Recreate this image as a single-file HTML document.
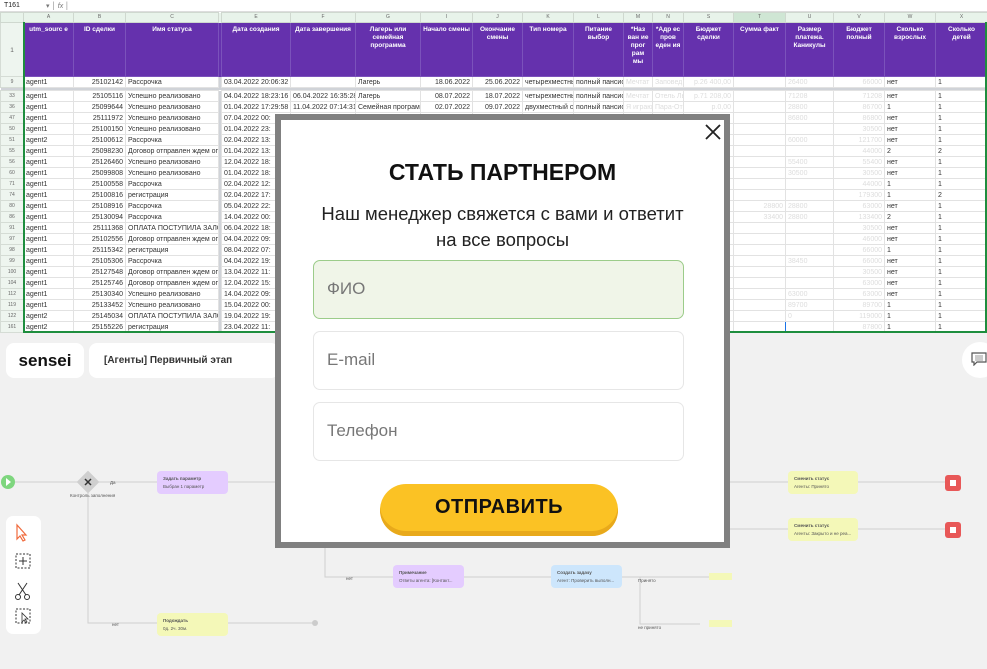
<!DOCTYPE html>
<html><head><meta charset="utf-8">
<style>
*{margin:0;padding:0;box-sizing:border-box}
body{width:987px;height:669px;overflow:hidden;background:#f1f1f1;font-family:"Liberation Sans","DejaVu Sans",sans-serif;position:relative}
.abs{position:absolute}
#sheet{position:absolute;left:0;top:0;width:987px;height:333px;background:#fff;overflow:hidden}
#fbar{height:12px;font-size:7px;color:#222;border-bottom:1px solid #ddd;position:relative}
table{border-collapse:collapse;table-layout:fixed;position:absolute;left:0;top:12px;width:987px}
td{border:1px solid #e2e2e2;height:11px;font-size:7px;color:#333;white-space:nowrap;overflow:hidden;padding:0 2px;line-height:9px}
tr.ch td{background:#e8f3ea;color:#666;text-align:center;height:10px;font-size:5px;border-color:#cfd8cf}
tr.hd td{background:#6531ad;color:#fff;font-weight:bold;text-align:center;vertical-align:top;height:54px;white-space:normal;font-size:6.5px;line-height:8px;padding-top:3px;border-color:#7b52bb}
td.rn{background:#eef5ef;color:#666;font-size:5px;text-align:center;padding:0;border-color:#d5dcd5}
tr.hd td.rn{background:#eef5ef;color:#666;vertical-align:middle;font-weight:normal;border-color:#d5dcd5}
td.r{text-align:right}
td.fz{background:#d0d3d8;border:none;padding:0}
td.f{color:#ddd}
</style></head><body>
<div id="sheet">
<div id="fbar"><span class="abs" style="left:4px;top:2px">T161</span><span class="abs" style="left:46px;top:2px;color:#777">▾ │ <i>fx</i> │</span></div>
<table>
<colgroup><col style="width:23px"><col style="width:50px"><col style="width:52px"><col style="width:93px"><col style="width:3px"><col style="width:69px"><col style="width:65px"><col style="width:65px"><col style="width:52px"><col style="width:50px"><col style="width:51px"><col style="width:50px"><col style="width:29px"><col style="width:31px"><col style="width:50px"><col style="width:52px"><col style="width:48px"><col style="width:51px"><col style="width:51px"><col style="width:52px"></colgroup>
<tr class="ch"><td class="rn"></td><td>A</td><td>B</td><td>C</td><td class="fz"></td><td>E</td><td>F</td><td>G</td><td>I</td><td>J</td><td>K</td><td>L</td><td>M</td><td>N</td><td>S</td><td style="background:#cfe6d4">T</td><td>U</td><td>V</td><td>W</td><td>X</td></tr>
<tr class="hd"><td class="rn">1</td><td>utm_sourc e</td><td>ID сделки</td><td>Имя статуса</td><td class="fz"></td><td>Дата создания</td><td>Дата завершения</td><td>Лагерь или семейная программа</td><td>Начало смены</td><td>Окончание смены</td><td>Тип номера</td><td>Питание выбор</td><td>*Наз ван ие прог рам мы</td><td>*Адр ес пров еден ия</td><td>Бюджет сделки</td><td>Сумма факт</td><td>Размер платежа. Каникулы</td><td>Бюджет полный</td><td>Сколько взрослых</td><td>Сколько детей</td></tr>
<tr><td class="rn">9</td><td>agent1</td><td class="r">25102142</td><td>Рассрочка</td><td class="fz"></td><td class="r">03.04.2022 20:06:32</td><td></td><td>Лагерь</td><td class="r">18.06.2022</td><td class="r">25.06.2022</td><td>четырехместны</td><td>полный пансион</td><td class="f">Мечтат</td><td class="f">Заповед</td><td class="r f">р.26 400,00</td><td></td><td class="f">26400</td><td class="r f">66000</td><td>нет</td><td>1</td></tr>
<tr><td colspan="20" style="height:3px;background:#d0d3d8;border:none;padding:0"></td></tr>
<tr><td class="rn">33</td><td>agent1</td><td class="r">25105116</td><td>Успешно реализовано</td><td class="fz"></td><td class="r">04.04.2022 18:23:16</td><td>06.04.2022 16:35:28</td><td>Лагерь</td><td class="r">08.07.2022</td><td class="r">18.07.2022</td><td>четырехместны</td><td>полный пансион</td><td class="f">Мечтат</td><td class="f">Отель Ль</td><td class="r f">р.71 208,00</td><td></td><td class="f">71208</td><td class="r f">71208</td><td>нет</td><td>1</td></tr>
<tr><td class="rn">36</td><td>agent1</td><td class="r">25099644</td><td>Успешно реализовано</td><td class="fz"></td><td class="r">01.04.2022 17:29:58</td><td>11.04.2022 07:14:31</td><td>Семейная програм</td><td class="r">02.07.2022</td><td class="r">09.07.2022</td><td>двухместный ст</td><td>полный пансион</td><td class="f">Я играю</td><td class="f">Пара-Отель</td><td class="r f">р.0,00</td><td></td><td class="f">28800</td><td class="r f">86700</td><td>1</td><td>1</td></tr>
<tr><td class="rn">47</td><td>agent1</td><td class="r">25111972</td><td>Успешно реализовано</td><td class="fz"></td><td>07.04.2022 00:</td><td></td><td></td><td></td><td></td><td></td><td></td><td></td><td></td><td></td><td></td><td class="f">86800</td><td class="r f">86800</td><td>нет</td><td>1</td></tr>
<tr><td class="rn">50</td><td>agent1</td><td class="r">25100150</td><td>Успешно реализовано</td><td class="fz"></td><td>01.04.2022 23:</td><td></td><td></td><td></td><td></td><td></td><td></td><td></td><td></td><td></td><td></td><td></td><td class="r f">30500</td><td>нет</td><td>1</td></tr>
<tr><td class="rn">51</td><td>agent2</td><td class="r">25100612</td><td>Рассрочка</td><td class="fz"></td><td>02.04.2022 13:</td><td></td><td></td><td></td><td></td><td></td><td></td><td></td><td></td><td></td><td></td><td class="f">60000</td><td class="r f">121700</td><td>нет</td><td>1</td></tr>
<tr><td class="rn">55</td><td>agent1</td><td class="r">25098230</td><td>Договор отправлен ждем опл</td><td class="fz"></td><td>01.04.2022 13:</td><td></td><td></td><td></td><td></td><td></td><td></td><td></td><td></td><td></td><td></td><td></td><td class="r f">44000</td><td>2</td><td>2</td></tr>
<tr><td class="rn">56</td><td>agent1</td><td class="r">25126460</td><td>Успешно реализовано</td><td class="fz"></td><td>12.04.2022 18:</td><td></td><td></td><td></td><td></td><td></td><td></td><td></td><td></td><td></td><td></td><td class="f">55400</td><td class="r f">55400</td><td>нет</td><td>1</td></tr>
<tr><td class="rn">60</td><td>agent1</td><td class="r">25099808</td><td>Успешно реализовано</td><td class="fz"></td><td>01.04.2022 18:</td><td></td><td></td><td></td><td></td><td></td><td></td><td></td><td></td><td></td><td></td><td class="f">30500</td><td class="r f">30500</td><td>нет</td><td>1</td></tr>
<tr><td class="rn">71</td><td>agent1</td><td class="r">25100558</td><td>Рассрочка</td><td class="fz"></td><td>02.04.2022 12:</td><td></td><td></td><td></td><td></td><td></td><td></td><td></td><td></td><td></td><td></td><td></td><td class="r f">44000</td><td>1</td><td>1</td></tr>
<tr><td class="rn">74</td><td>agent1</td><td class="r">25100816</td><td>регистрация</td><td class="fz"></td><td>02.04.2022 17:</td><td></td><td></td><td></td><td></td><td></td><td></td><td></td><td></td><td></td><td></td><td></td><td class="r f">179300</td><td>1</td><td>2</td></tr>
<tr><td class="rn">80</td><td>agent1</td><td class="r">25108916</td><td>Рассрочка</td><td class="fz"></td><td>05.04.2022 22:</td><td></td><td></td><td></td><td></td><td></td><td></td><td></td><td></td><td></td><td class="r f">28800</td><td class="f">28800</td><td class="r f">63000</td><td>нет</td><td>1</td></tr>
<tr><td class="rn">86</td><td>agent1</td><td class="r">25130094</td><td>Рассрочка</td><td class="fz"></td><td>14.04.2022 00:</td><td></td><td></td><td></td><td></td><td></td><td></td><td></td><td></td><td></td><td class="r f">33400</td><td class="f">28800</td><td class="r f">133400</td><td>2</td><td>1</td></tr>
<tr><td class="rn">91</td><td>agent1</td><td class="r">25111368</td><td>ОПЛАТА ПОСТУПИЛА ЗАЛО</td><td class="fz"></td><td>06.04.2022 18:</td><td></td><td></td><td></td><td></td><td></td><td></td><td></td><td></td><td></td><td></td><td></td><td class="r f">30500</td><td>нет</td><td>1</td></tr>
<tr><td class="rn">97</td><td>agent1</td><td class="r">25102556</td><td>Договор отправлен ждем опл</td><td class="fz"></td><td>04.04.2022 09:</td><td></td><td></td><td></td><td></td><td></td><td></td><td></td><td></td><td></td><td></td><td></td><td class="r f">46000</td><td>нет</td><td>1</td></tr>
<tr><td class="rn">98</td><td>agent1</td><td class="r">25115342</td><td>регистрация</td><td class="fz"></td><td>08.04.2022 07:</td><td></td><td></td><td></td><td></td><td></td><td></td><td></td><td></td><td></td><td></td><td></td><td class="r f">66000</td><td>1</td><td>1</td></tr>
<tr><td class="rn">99</td><td>agent1</td><td class="r">25105306</td><td>Рассрочка</td><td class="fz"></td><td>04.04.2022 19:</td><td></td><td></td><td></td><td></td><td></td><td></td><td></td><td></td><td></td><td></td><td class="f">38450</td><td class="r f">66000</td><td>нет</td><td>1</td></tr>
<tr><td class="rn">100</td><td>agent1</td><td class="r">25127548</td><td>Договор отправлен ждем опл</td><td class="fz"></td><td>13.04.2022 11:</td><td></td><td></td><td></td><td></td><td></td><td></td><td></td><td></td><td></td><td></td><td></td><td class="r f">30500</td><td>нет</td><td>1</td></tr>
<tr><td class="rn">104</td><td>agent1</td><td class="r">25125746</td><td>Договор отправлен ждем опл</td><td class="fz"></td><td>12.04.2022 15:</td><td></td><td></td><td></td><td></td><td></td><td></td><td></td><td></td><td></td><td></td><td></td><td class="r f">63000</td><td>нет</td><td>1</td></tr>
<tr><td class="rn">112</td><td>agent1</td><td class="r">25130340</td><td>Успешно реализовано</td><td class="fz"></td><td>14.04.2022 09:</td><td></td><td></td><td></td><td></td><td></td><td></td><td></td><td></td><td></td><td></td><td class="f">63000</td><td class="r f">63000</td><td>нет</td><td>1</td></tr>
<tr><td class="rn">119</td><td>agent1</td><td class="r">25133452</td><td>Успешно реализовано</td><td class="fz"></td><td>15.04.2022 00:</td><td></td><td></td><td></td><td></td><td></td><td></td><td></td><td></td><td></td><td></td><td class="f">89700</td><td class="r f">89700</td><td>1</td><td>1</td></tr>
<tr><td class="rn">122</td><td>agent2</td><td class="r">25145034</td><td>ОПЛАТА ПОСТУПИЛА ЗАЛО</td><td class="fz"></td><td>19.04.2022 19:</td><td></td><td></td><td></td><td></td><td></td><td></td><td></td><td></td><td></td><td></td><td class="f">0</td><td class="r f">119000</td><td>1</td><td>1</td></tr>
<tr><td class="rn">161</td><td>agent2</td><td class="r">25155226</td><td>регистрация</td><td class="fz"></td><td>23.04.2022 11:</td><td></td><td></td><td></td><td></td><td></td><td></td><td></td><td></td><td></td><td style="border:1.5px solid #1a73e8"></td><td></td><td class="r f">87800</td><td>1</td><td>1</td></tr>
</table>
<div class="abs" style="left:23px;top:331px;width:964px;height:2px;background:#1e8e3e"></div>
<div class="abs" style="left:23px;top:22px;width:2px;height:310px;background:#1e8e3e"></div>
<div class="abs" style="left:985px;top:22px;width:2px;height:310px;background:#1e8e3e"></div>
</div>

<div class="abs" style="left:6px;top:343px;width:78px;height:35px;background:#fff;border-radius:8px;font-weight:bold;font-size:17px;line-height:35px;text-align:center;color:#111">sensei</div>
<div class="abs" style="left:89px;top:343px;width:190px;height:35px;background:#fff;border-radius:8px;font-weight:bold;font-size:10px;line-height:35px;padding-left:15px;color:#333">[Агенты] Первичный этап</div>
<div class="abs" style="left:962px;top:342px;width:36px;height:36px;background:#fff;border-radius:50%"></div>
<svg class="abs" style="left:971px;top:352px" width="16" height="14" viewBox="0 0 16 14"><path d="M1 1h14v9H6l-3 3v-3H1z" fill="none" stroke="#555" stroke-width="1.2"/><path d="M4 4h8M4 6h8M4 8h8" stroke="#777" stroke-width=".8"/></svg>

<svg class="abs" style="left:0;top:332px" width="987" height="337">
<g stroke="#cfcfcf" stroke-width="1" fill="none">
<path d="M14 150H80M96 150H157M228 150H280M730 150H788M858 150H946M730 197H788M858 197H946M88 158V291H157M228 291H312M325 216V245H393M464 245H551M622 245H640V292H700M640 245H709"/>
</g>
<circle cx="8" cy="150" r="7" fill="#7ed67e"/><path d="M6 146l5 4-5 4z" fill="#fff"/>
<rect x="80" y="142" width="16" height="16" transform="rotate(45 88 150)" fill="#cfcfcf"/>
<path d="M85 147l6 6M91 147l-6 6" stroke="#333" stroke-width="1.5"/>
<circle cx="315" cy="291" r="3" fill="#ccc"/>
<rect x="157" y="139" width="71" height="23" rx="4" fill="#e4ccff"/>
<rect x="157" y="281" width="71" height="23" rx="4" fill="#f4f8b8"/>
<rect x="393" y="233" width="71" height="23" rx="4" fill="#e4ccff"/>
<rect x="551" y="233" width="71" height="23" rx="4" fill="#cde6fc"/>
<rect x="788" y="139" width="70" height="23" rx="4" fill="#f4f8b8"/>
<rect x="788" y="186" width="70" height="23" rx="4" fill="#f4f8b8"/>
<rect x="709" y="241" width="23" height="7" fill="#f4f8b8"/>
<rect x="709" y="288" width="23" height="7" fill="#f4f8b8"/>
<rect x="945" y="143" width="16" height="16" rx="3" fill="#e85858"/><rect x="950" y="148" width="6" height="6" fill="#fff"/>
<rect x="945" y="190" width="16" height="16" rx="3" fill="#e85858"/><rect x="950" y="195" width="6" height="6" fill="#fff"/>
<g font-family="Liberation Sans" font-size="4.5" fill="#555">
<text x="163" y="148" font-weight="bold">Задать параметр</text><text x="163" y="156">Выбран 1 параметр</text>
<text x="163" y="290" font-weight="bold">Подождать</text><text x="163" y="298">0д. 2ч. 30м.</text>
<text x="399" y="242" font-weight="bold">Примечание</text><text x="399" y="250">Ответы агента: [Контакт...</text>
<text x="557" y="242" font-weight="bold">Создать задачу</text><text x="557" y="250">Агент: Проверить выполн...</text>
<text x="794" y="148" font-weight="bold">Сменить статус</text><text x="794" y="156">Агенты: Принято</text>
<text x="794" y="195" font-weight="bold">Сменить статус</text><text x="794" y="203">Агенты: Закрыто и не реа...</text>
<text x="70" y="165">Контроль заполнения</text><text x="110" y="152">Да</text><text x="112" y="294">нет</text><text x="346" y="248">нет</text><text x="638" y="250">Принято</text><text x="638" y="297">не принято</text>
</g>
</svg>
<div class="abs" style="left:6px;top:516px;width:35px;height:118px;background:#fff;border-radius:7px"></div>
<svg class="abs" style="left:13px;top:523px" width="20" height="105" viewBox="0 0 20 105">
<path d="M4 2l0 14 3-3 3 5 2-1-3-5h4z" fill="none" stroke="#f06a3c" stroke-width="1.2"/>
<rect x="3" y="31" width="14" height="14" fill="none" stroke="#333" stroke-dasharray="2 1.5"/><path d="M10 34v8M6 38h8" stroke="#333"/>
<circle cx="5" cy="74" r="2.5" fill="none" stroke="#333"/><circle cx="14" cy="74" r="2.5" fill="none" stroke="#333"/><path d="M6 72l8-12M13 72l-8-12" stroke="#333"/>
<rect x="3" y="86" width="14" height="14" fill="none" stroke="#333" stroke-dasharray="2 1.5"/><path d="M9 90v9l2-2 2 3 1-1-2-3h3z" fill="none" stroke="#333" stroke-width=".8"/>
</svg>

<div class="abs" style="left:275px;top:114px;width:455px;height:434px;border:6px solid #808080;background:#fff">
<svg class="abs" style="left:423px;top:3px" width="18" height="18"><path d="M2 2l14 14M16 2L2 16" stroke="#222" stroke-width="1.8"/></svg>
<div class="abs" style="left:0;top:39px;width:443px;text-align:center;font-weight:bold;font-size:23px;color:#111">СТАТЬ ПАРТНЕРОМ</div>
<div class="abs" style="left:0;top:81px;width:443px;text-align:center;font-size:18.5px;line-height:26px;color:#222">Наш менеджер свяжется с вами и ответит<br>на все вопросы</div>
<div class="abs" style="left:32px;top:140px;width:371px;height:59px;background:#f0f5e8;border:1.5px solid #9ccc8a;border-radius:7px;font-size:17px;color:#777;line-height:56px;padding-left:13px">ФИО</div>
<div class="abs" style="left:32px;top:211px;width:371px;height:59px;background:#fff;border:1.5px solid #e6e6e6;border-radius:7px;font-size:17px;color:#777;line-height:56px;padding-left:13px">E-mail</div>
<div class="abs" style="left:32px;top:282px;width:371px;height:59px;background:#fff;border:1.5px solid #e6e6e6;border-radius:7px;font-size:17px;color:#777;line-height:56px;padding-left:13px">Телефон</div>
<div class="abs" style="left:99px;top:364px;width:238px;height:52px;background:#fbc224;border-radius:26px;box-shadow:inset 0 -5px 0 #e8a91b;text-align:center;font-weight:bold;font-size:20px;line-height:46px;color:#111;letter-spacing:.5px">ОТПРАВИТЬ</div>
</div>
</body></html>
